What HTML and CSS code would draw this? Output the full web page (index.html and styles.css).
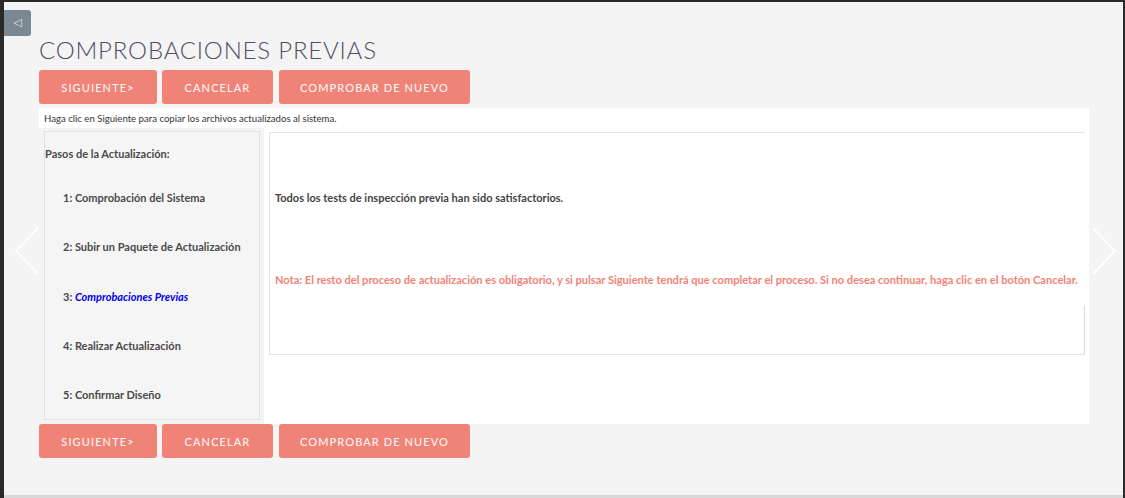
FILE: index.html
```html
<!DOCTYPE html>
<html lang="es">
<head>
<meta charset="utf-8">
<title>Comprobaciones Previas</title>
<link rel="stylesheet" href="styles.css">
</head>
<body>
<div class="frame">
  <button class="toggle" type="button">&#9665;</button>
  <div class="arrow arrow-left">
    <svg width="26" height="50" viewBox="0 0 26 50"><polyline points="24,1 2,24 24,47" fill="none" stroke="#ffffff" stroke-width="2"/></svg>
  </div>
  <div class="arrow arrow-right">
    <svg width="26" height="50" viewBox="0 0 26 50"><polyline points="2,1 24,24 2,47" fill="none" stroke="#ffffff" stroke-width="2"/></svg>
  </div>
  <div class="content">
    <h1 class="title">COMPROBACIONES PREVIAS</h1>
    <div class="buttons">
      <button class="btn btn-next" type="button">SIGUIENTE&gt;</button>
      <button class="btn btn-cancel" type="button">CANCELAR</button>
      <button class="btn btn-again" type="button">COMPROBAR DE NUEVO</button>
    </div>
    <div class="panel">
      <div class="hint">Haga clic en Siguiente para copiar los archivos actualizados al sistema.</div>
      <div class="panel-row">
        <div class="side-cell">
          <div class="steps">
            <div class="steps-title">Pasos de la Actualización:</div>
            <div class="step">1: Comprobación del Sistema</div>
            <div class="step">2: Subir un Paquete de Actualización</div>
            <div class="step">3: <em class="current">Comprobaciones Previas</em></div>
            <div class="step">4: Realizar Actualización</div>
            <div class="step">5: Confirmar Diseño</div>
          </div>
        </div>
        <div class="main-cell">
          <div class="result">
            <div class="result-ok">Todos los tests de inspección previa han sido satisfactorios.</div>
            <div class="result-note">Nota: El resto del proceso de actualización es obligatorio, y si pulsar Siguiente tendrá que completar el proceso. Si no desea continuar, haga clic en el botón Cancelar.</div>
            <div class="result-foot"></div>
          </div>
        </div>
      </div>
    </div>
    <div class="buttons">
      <button class="btn btn-next" type="button">SIGUIENTE&gt;</button>
      <button class="btn btn-cancel" type="button">CANCELAR</button>
      <button class="btn btn-again" type="button">COMPROBAR DE NUEVO</button>
    </div>
  </div>
</div>
</body>
</html>
```
FILE: styles.css
```css
html, body {
  margin: 0;
  padding: 0;
  background: #2a2a2a;
  width: 1125px;
  height: 498px;
  overflow: hidden;
}

body {
  font-family: Lato, "Open Sans", "Liberation Sans", sans-serif;
  padding-top: 2px;
  padding-left: 4px;
  box-sizing: border-box;
}

.frame {
  position: relative;
  width: 1119px;
  height: 493px;
  background: #f4f4f4;
  border-bottom: 3px solid #dadada;
  box-sizing: content-box;
}

.toggle {
  position: absolute;
  left: 0;
  top: 8px;
  width: 27px;
  height: 26px;
  padding: 0;
  border: none;
  border-radius: 0 3px 3px 0;
  background: #7a8893;
  color: #e8ecef;
  font-size: 11px;
  line-height: 26px;
  text-align: center;
  font-family: "DejaVu Sans", sans-serif;
}

.arrow {
  position: absolute;
  top: 225px;
  width: 26px;
  height: 50px;
}

.arrow svg {
  display: block;
}

.arrow-left {
  left: 10px;
}

.arrow-right {
  left: 1087px;
}

.content {
  padding-left: 35px;
  width: 1050px;
}

.title {
  margin: 0;
  padding-top: 34px;
  height: 34px;
  font-weight: 300;
  font-size: 24px;
  line-height: 28px;
  letter-spacing: 0.8px;
  color: #534d64;
}

.buttons {
  display: flex;
  gap: 5px;
}

.btn {
  height: 34px;
  border: none;
  border-radius: 3px;
  background: #f08377;
  color: #fbf3f2;
  font-family: Lato, "Open Sans", sans-serif;
  font-size: 11px;
  font-weight: 500;
  letter-spacing: 1.1px;
  padding: 0;
  text-align: center;
}

.btn-next {
  width: 118px;
}

.btn-cancel {
  width: 111px;
}

.btn-again {
  width: 191px;
  margin-left: 1px;
}

.panel {
  margin-top: 4px;
  background: #ffffff;
  width: 1050px;
  height: 316px;
}

.hint {
  height: 20px;
  padding-left: 5px;
  font-size: 9.6px;
  line-height: 21px;
  color: #333;
}

.panel-row {
  display: flex;
  height: 296px;
}

.side-cell {
  width: 225px;
  background: #f4f4f4;
  padding: 3px 4px 4px 5px;
  box-sizing: border-box;
}

.steps {
  height: 289px;
  border: 1px solid #e0e0e0;
  box-sizing: border-box;
  background: #f5f5f5;
  font-size: 11px;
  font-weight: 700;
  color: #4a4a4a;
}

.steps-title {
  padding-top: 15px;
  height: 49px;
  line-height: 14px;
  box-sizing: border-box;
  padding-left: 0;
}

.step {
  height: 49.3px;
  line-height: 14px;
  padding-top: 10px;
  box-sizing: border-box;
  padding-left: 18px;
}

.current {
  color: #0000ee;
  font-style: italic;
}

.main-cell {
  flex: 1;
  padding: 4px 4px 0 5px;
}

.result {
  width: 816px;
  height: 223px;
  border-top: 1px solid #e5e5e5;
  border-left: 1px solid #e5e5e5;
  border-bottom: 1px solid #e5e5e5;
  box-sizing: border-box;
  display: flex;
  flex-direction: column;
  font-size: 11px;
  font-weight: 700;
}

.result-ok {
  padding-top: 58px;
  padding-left: 5px;
  line-height: 14px;
  color: #444;
}

.result-note {
  padding-top: 68px;
  padding-left: 5px;
  line-height: 14px;
  color: #f08377;
  white-space: nowrap;
  font-size: 11.07px;
}

.result-foot {
  margin-top: auto;
  height: 49px;
  border-right: 1px solid #d8d8d8;
}
```
